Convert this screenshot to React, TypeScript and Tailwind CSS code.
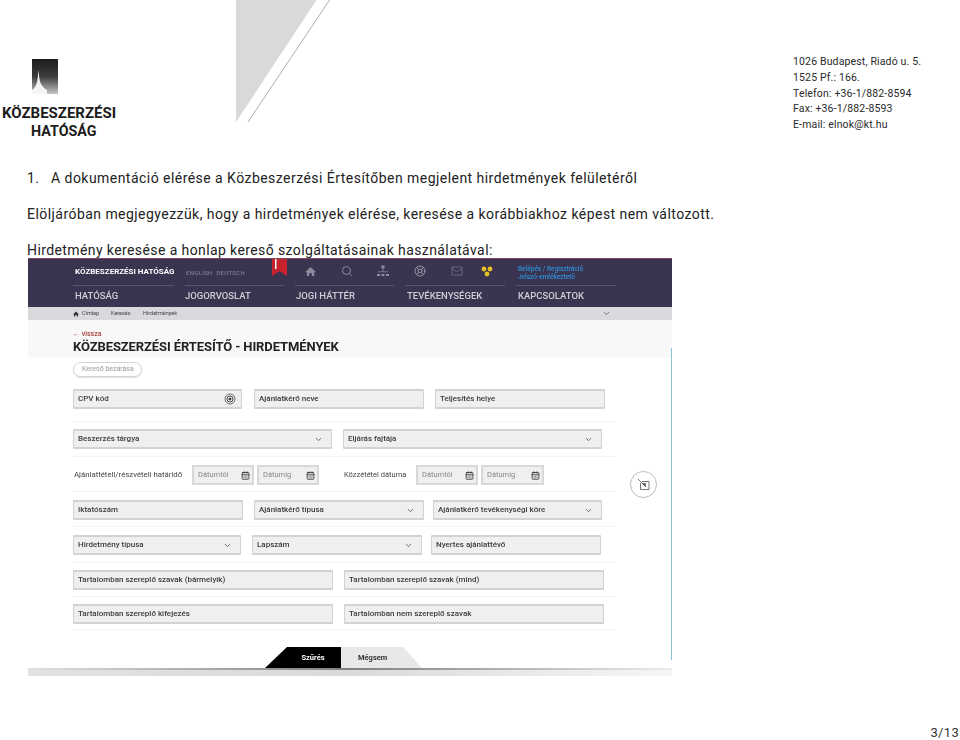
import { Search, LifeBuoy, Mail, ChevronDown, CalendarDays } from "lucide-react";

function Field({ className, label, chevron, children }: { className: string; label: string; chevron?: boolean; children?: React.ReactNode }) {
  return (
    <div className={`h-[20px] flex items-center justify-between pl-[4px] pr-[8px] bg-[#efefef] border-t-2 border-l border-r border-b-2 border-[#d2d2d2] rounded-[1px] ${className}`}>
      <span className="text-[8px] font-medium text-[#3c3c3c] whitespace-nowrap">{label}</span>
      {chevron && <ChevronDown size={9} strokeWidth={2} className="text-[#444]" />}
      {children}
    </div>
  );
}

function DateField({ className, label }: { className: string; label: string }) {
  return (
    <div className={`h-[20px] flex items-center justify-between pl-[4px] pr-[2px] bg-[#efefef] border-2 border-[#d8d8d8] ${className}`}>
      <span className="text-[7.5px] text-[#888] whitespace-nowrap">{label}</span>
      <CalendarDays size={9} strokeWidth={2.2} className="text-[#333]" />
    </div>
  );
}

function Row({ className, children }: { className: string; children: React.ReactNode }) {
  return <div className={`flex items-start border-b border-[#f3f3f3] w-[543px] ${className}`}>{children}</div>;
}

function HomeGlyph({ size, color }: { size: number; color: string }) {
  return (
    <svg width={size} height={size} viewBox="0 0 12 12" className="shrink-0">
      <path d="M6 1L12 6.8H10V11H7.5V7.8H4.5V11H2V6.8H0Z" fill={color} />
    </svg>
  );
}

export default function App() {
  return (
    <div className="w-[960px] h-[740px] bg-white overflow-hidden flex flex-col font-['Roboto',sans-serif] text-[#222]">
      <header className="h-[168px] flex items-start shrink-0">
        <div className="ml-[2px] mt-[59px] w-[115px] flex flex-col items-start">
          <svg width="26" height="35" viewBox="0 0 26 35" className="block ml-[30px]">
            <defs>
              <linearGradient id="logoGrad" x1="0" y1="0" x2="0" y2="1">
                <stop offset="0" stopColor="#1c1c1c" />
                <stop offset="0.5" stopColor="#3c3c3c" />
                <stop offset="1" stopColor="#c4c4c4" />
              </linearGradient>
            </defs>
            <rect width="26" height="35" fill="url(#logoGrad)" />
            <path d="M0 35V31Q3 29 4.5 25Q5.5 22 5.8 18L6.5 11L7.2 18Q7.5 22 9 25Q11 29 15 31V35Z" fill="#f4f4f4" />
          </svg>
          <div className="mt-[11px] text-[15px] leading-[17px] font-bold text-[#1c1c1c] whitespace-nowrap">KÖZBESZERZÉSI</div>
          <div className="mt-[1px] ml-[29px] text-[14.3px] leading-[17px] font-bold text-[#1c1c1c] whitespace-nowrap">HATÓSÁG</div>
        </div>
        <svg width="96" height="124" viewBox="0 0 96 124" className="ml-[118px] block shrink-0">
          <polygon points="1,0 81.5,0 1,122" fill="#d9d9d9" />
          <line x1="94.5" y1="0" x2="13" y2="122" stroke="#9a9a9a" strokeWidth="0.8" />
        </svg>
        <address className="ml-[462px] mt-[54px] not-italic text-[10.5px] leading-[15.75px] tracking-[0.15px] text-[#2a2a2a] whitespace-nowrap">
          <div>1026 Budapest, Riadó u. 5.</div>
          <div>1525 Pf.: 166.</div>
          <div>Telefon: +36-1/882-8594</div>
          <div>Fax: +36-1/882-8593</div>
          <div>E-mail: elnok@kt.hu</div>
        </address>
      </header>

      <h1 className="ml-[27px] text-[14px] leading-[20px] font-normal tracking-[0.46px] flex whitespace-nowrap">
        <span className="w-[24px]">1.</span>
        <span>A dokumentáció elérése a Közbeszerzési Értesítőben megjelent hirdetmények felületéről</span>
      </h1>
      <p className="ml-[27px] mt-[16px] text-[14px] leading-[20px] tracking-[0.45px] whitespace-nowrap">
        Elöljáróban megjegyezzük, hogy a hirdetmények elérése, keresése a korábbiakhoz képest nem változott.
      </p>
      <p className="ml-[27px] mt-[18px] text-[14px] leading-[16px] tracking-[0.4px] whitespace-nowrap">
        Hirdetmény keresése a honlap kereső szolgáltatásainak használatával:
      </p>

      {/* embedded site screenshot */}
      <div className="ml-[28px] w-[644px] relative blur-[0.35px] shrink-0">
        <div className="h-[49px] bg-[#3b3450] border-t border-[#7a4a5a] relative">
          <div className="flex items-center h-[26px] pb-[2px] w-[588px] ml-[45px]">
            <span className="ml-[2px] w-[111px] pt-[2px] text-[8px] font-bold text-white whitespace-nowrap">KÖZBESZERZÉSI HATÓSÁG</span>
            <span className="w-[119px] pt-[2px] text-[6px] font-medium text-[#7f7a92] tracking-[0.3px] whitespace-nowrap">ENGLISH&nbsp; DEUTSCH</span>
            <HomeGlyph size={11} color="#8f8b9c" />
            <Search size={12} className="ml-[25px] text-[#8f8b9c]" />
            <svg width="12" height="12" viewBox="0 0 12 12" className="ml-[24px]" fill="#8f8b9c">
              <rect x="4.5" y="0.5" width="3" height="3" />
              <rect x="5.6" y="3.5" width="0.8" height="3.5" />
              <rect x="1" y="6.5" width="10" height="0.7" />
              <rect x="0" y="9" width="3" height="2" />
              <rect x="4.5" y="9" width="3" height="2" />
              <rect x="9" y="9" width="3" height="2" />
            </svg>
            <LifeBuoy size={12} strokeWidth={2} className="ml-[25px] text-[#9a96a6]" />
            <Mail size={12} strokeWidth={1.1} className="ml-[25px] text-[#8f8b9c]" />
            <svg width="12" height="11" viewBox="0 0 12 11" className="ml-[18px]">
              <circle cx="3" cy="3" r="2.4" fill="#e6c020" />
              <circle cx="9" cy="3" r="2.4" fill="#e6c020" />
              <circle cx="6" cy="8" r="2.4" fill="#e6c020" />
            </svg>
            <div className="ml-[25px] mt-[4px] text-[6.5px] leading-[8px] font-medium text-[#2f8fd8] whitespace-nowrap">
              <div>Belépés / Regisztráció</div>
              <div>Jelszó-emlékeztető</div>
            </div>
          </div>
          <div className="flex ml-[45px] gap-[11px] text-[9.5px] font-medium text-[#cfcdd6]">
            <span className="w-[101px] pl-[2px] pt-[3px] h-[22px] border-t border-[#5a546d]">HATÓSÁG</span>
            <span className="w-[99px] pt-[3px] h-[22px] border-t border-[#5a546d]">JOGORVOSLAT</span>
            <span className="w-[99px] pl-[1px] pt-[3px] h-[22px] border-t border-[#5a546d]">JOGI HÁTTÉR</span>
            <span className="w-[100px] pl-[2px] pt-[3px] h-[22px] border-t border-[#5a546d]">TEVÉKENYSÉGEK</span>
            <span className="w-[100px] pl-[2px] pt-[3px] h-[22px] border-t border-[#5a546d]">KAPCSOLATOK</span>
          </div>
          <svg width="15" height="17" viewBox="0 0 15 17" className="absolute left-[244px] top-0">
            <path d="M0 0H15V17L7.5 12L0 17Z" fill="#c8232c" />
            <rect x="3" y="0" width="1.5" height="10" fill="#fff" />
          </svg>
        </div>
        <div className="h-[13px] bg-[#d9d9dd] flex items-center pl-[45px] pr-[61px] text-[5.5px] text-[#444] whitespace-nowrap">
          <HomeGlyph size={6} color="#333" />
          <span className="ml-[3px] w-[29px]">Címlap</span>
          <span className="w-[32px]">Keresés</span>
          <span>Hirdetmények</span>
          <ChevronDown size={9} className="ml-auto text-[#555]" />
        </div>
        <div className="h-[38px] bg-[#f8f8f8] pl-[45px] pt-[11px]">
          <div className="text-[7px] leading-[7px] font-medium text-[#a8423f] whitespace-nowrap">← vissza</div>
          <div className="mt-[1px] text-[13px] leading-[16px] font-bold tracking-[-0.1px] text-[#222] whitespace-nowrap">KÖZBESZERZÉSI ÉRTESÍTŐ - HIRDETMÉNYEK</div>
        </div>
        <div className="h-[310px] bg-white pl-[45px] pt-[4px]">
          <div className="w-[69px] h-[15px] rounded-full border border-[#d4d4d4] shadow-[0_1px_1px_#ddd] flex items-center pl-[8px] text-[7px] text-[#999] whitespace-nowrap">Kereső bezárása</div>

          <Row className="mt-[12px] h-[33px] gap-[12px]">
            <Field className="w-[169px]" label="CPV kód">
              <svg width="12" height="12" viewBox="0 0 12 12" className="-mr-[3px]" fill="none" stroke="#333">
                <circle cx="6" cy="6" r="5" strokeWidth="0.7" />
                <circle cx="6" cy="6" r="3" strokeWidth="0.9" />
                <circle cx="6" cy="6" r="1" fill="#333" />
              </svg>
            </Field>
            <Field className="w-[170px]" label="Ajánlatkérő neve" />
            <Field className="w-[170px] -ml-[1px]" label="Teljesítés helye" />
          </Row>
          <Row className="pt-[7px] h-[35px] gap-[11px]">
            <Field className="w-[259px]" label="Beszerzés tárgya" chevron />
            <Field className="w-[259px]" label="Eljárás fajtája" chevron />
          </Row>
          <Row className="pt-[8px] h-[35px]">
            <span className="w-[119px] h-[20px] flex items-center pl-[1px] text-[7.8px] text-[#444] whitespace-nowrap">Ajánlattételi/részvételi határidő</span>
            <DateField className="w-[62px]" label="Dátumtól" />
            <DateField className="w-[62px] ml-[3px]" label="Dátumig" />
            <span className="ml-[25px] w-[72px] h-[20px] flex items-center text-[7.5px] text-[#444] whitespace-nowrap">Közzététel dátuma</span>
            <DateField className="w-[62px]" label="Dátumtól" />
            <DateField className="w-[63px] ml-[3px]" label="Dátumig" />
          </Row>
          <Row className="pt-[8px] h-[35px]">
            <Field className="w-[170px]" label="Iktatószám" />
            <Field className="w-[170px] ml-[11px]" label="Ajánlatkérő típusa" chevron />
            <Field className="w-[169px] ml-[9px]" label="Ajánlatkérő tevékenységi köre" chevron />
          </Row>
          <Row className="pt-[8px] h-[36px]">
            <Field className="w-[168px]" label="Hirdetmény típusa" chevron />
            <Field className="w-[170px] ml-[11px]" label="Lapszám" chevron />
            <Field className="w-[170px] ml-[9px]" label="Nyertes ajánlattévő" />
          </Row>
          <Row className="pt-[7px] h-[34px] gap-[11px]">
            <Field className="w-[260px]" label="Tartalomban szereplő szavak (bármelyik)" />
            <Field className="w-[260px]" label="Tartalomban szereplő szavak (mind)" />
          </Row>
          <Row className="pt-[7px] h-[33px] gap-[11px]">
            <Field className="w-[260px]" label="Tartalomban szereplő kifejezés" />
            <Field className="w-[260px]" label="Tartalomban nem szereplő szavak" />
          </Row>
          <div className="flex mt-[17px] ml-[192px] h-[21px] text-[7.5px] font-bold">
            <div className="w-[76px] bg-black text-white flex items-center justify-center pl-[20px] [clip-path:polygon(22px_0,100%_0,100%_100%,0_100%)]">Szűrés</div>
            <div className="w-[81px] bg-[#e8e8e8] text-[#333] flex items-center pl-[17px] [clip-path:polygon(0_0,62px_0,100%_100%,0_100%)]">Mégsem</div>
          </div>
        </div>
        <div className="h-[2px] bg-gradient-to-r from-[#e0e0e0] via-[#808080] to-[#ececec]" />
        <div className="h-[6px] bg-gradient-to-r from-[#e2e2e2] via-[#dadada] to-[#f6f6f6]" />
        <div className="absolute right-0 top-[90px] h-[312px] w-[1.5px] bg-[#8fc0d6]" />
        <div className="absolute left-[602px] top-[213px] w-[27px] h-[27px] rounded-full border border-[#bbb] bg-white flex items-center justify-center">
          <svg width="14" height="14" viewBox="0 0 14 14" fill="none" stroke="#666" strokeWidth="0.9">
            <path d="M5 3.5H12V11.5H3.5V5" />
            <path d="M1 1L8.5 8.5" />
            <path d="M5 5.5L8.5 8.5V5.5Z" fill="#666" />
          </svg>
        </div>
      </div>

      <div className="mt-auto pr-[1px] text-right text-[13px] leading-[15px] tracking-[0.3px] text-[#333]">3/13</div>
    </div>
  );
}
